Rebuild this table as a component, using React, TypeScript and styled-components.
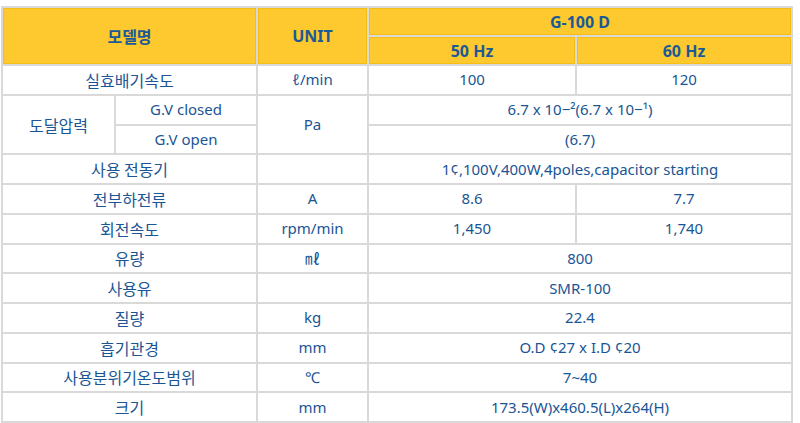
import React from "react";
import styled, { createGlobalStyle } from "styled-components";

const Global = createGlobalStyle`
  html, body { margin: 0; padding: 0; background: #ffffff; }
  body { font-family: "Noto Sans", "Noto Sans CJK KR", sans-serif; }
`;

const Spec = styled.div`
  box-sizing: border-box;
  margin: 6px 0 0 1px;
  width: 792px;
  height: 417px;
  padding: 2px;
  background: #d9d9d9;
  display: grid;
  gap: 2px;
  grid-template-columns: 111px 140px 109px 206px 214px;
  grid-template-rows: 27px 27px repeat(12, 1fr);
`;

const Cell = styled.div<{ $cols?: number; $rows?: number; $ko?: boolean }>`
  display: flex;
  align-items: center;
  justify-content: center;
  background: #ffffff;
  color: #1a5595;
  font-family: ${(p) =>
    p.$ko ? `"Noto Sans CJK KR", sans-serif` : `"Noto Sans", "Noto Sans CJK KR", sans-serif`};
  font-size: ${(p) => (p.$ko ? "16px" : "15px")};
  line-height: 1;
  white-space: nowrap;
  grid-column: span ${(p) => p.$cols ?? 1};
  grid-row: span ${(p) => p.$rows ?? 1};
`;

const Head = styled(Cell)`
  background: #fdc92e;
  box-shadow: inset 0 0 0 1px #f6bd14;
  font-weight: 700;
  font-size: 16px;
  color: #1b5a95;
`;

const App: React.FC = () => {
  const simple: { label: string; unit: string; values: string[] }[] = [
    { label: "사용 전동기", unit: "", values: ["1¢,100V,400W,4poles,capacitor starting"] },
    { label: "전부하전류", unit: "A", values: ["8.6", "7.7"] },
    { label: "회전속도", unit: "rpm/min", values: ["1,450", "1,740"] },
    { label: "유량", unit: "㎖", values: ["800"] },
    { label: "사용유", unit: "", values: ["SMR-100"] },
    { label: "질량", unit: "kg", values: ["22.4"] },
    { label: "흡기관경", unit: "mm", values: ["O.D ¢27 x I.D ¢20"] },
    { label: "사용분위기온도범위", unit: "℃", values: ["7~40"] },
    { label: "크기", unit: "mm", values: ["173.5(W)x460.5(L)x264(H)"] },
  ];

  return (
    <>
      <Global />
      <Spec>
        <Head $cols={2} $rows={2} $ko>모델명</Head>
        <Head $rows={2}>UNIT</Head>
        <Head $cols={2}>G-100 D</Head>
        <Head>50 Hz</Head>
        <Head>60 Hz</Head>

        <Cell $cols={2} $ko>실효배기속도</Cell>
        <Cell>ℓ/min</Cell>
        <Cell>100</Cell>
        <Cell>120</Cell>

        <Cell $rows={2} $ko>도달압력</Cell>
        <Cell>G.V closed</Cell>
        <Cell $rows={2}>Pa</Cell>
        <Cell $cols={2}>6.7 x 10−²(6.7 x 10−¹)</Cell>
        <Cell>G.V open</Cell>
        <Cell $cols={2}>(6.7)</Cell>

        {simple.map((r) => (
          <React.Fragment key={r.label}>
            <Cell $cols={2} $ko>{r.label}</Cell>
            <Cell>{r.unit}</Cell>
            {r.values.map((v, i) => (
              <Cell key={i} $cols={r.values.length === 1 ? 2 : 1}>
                {v}
              </Cell>
            ))}
          </React.Fragment>
        ))}
      </Spec>
    </>
  );
};

export default App;
